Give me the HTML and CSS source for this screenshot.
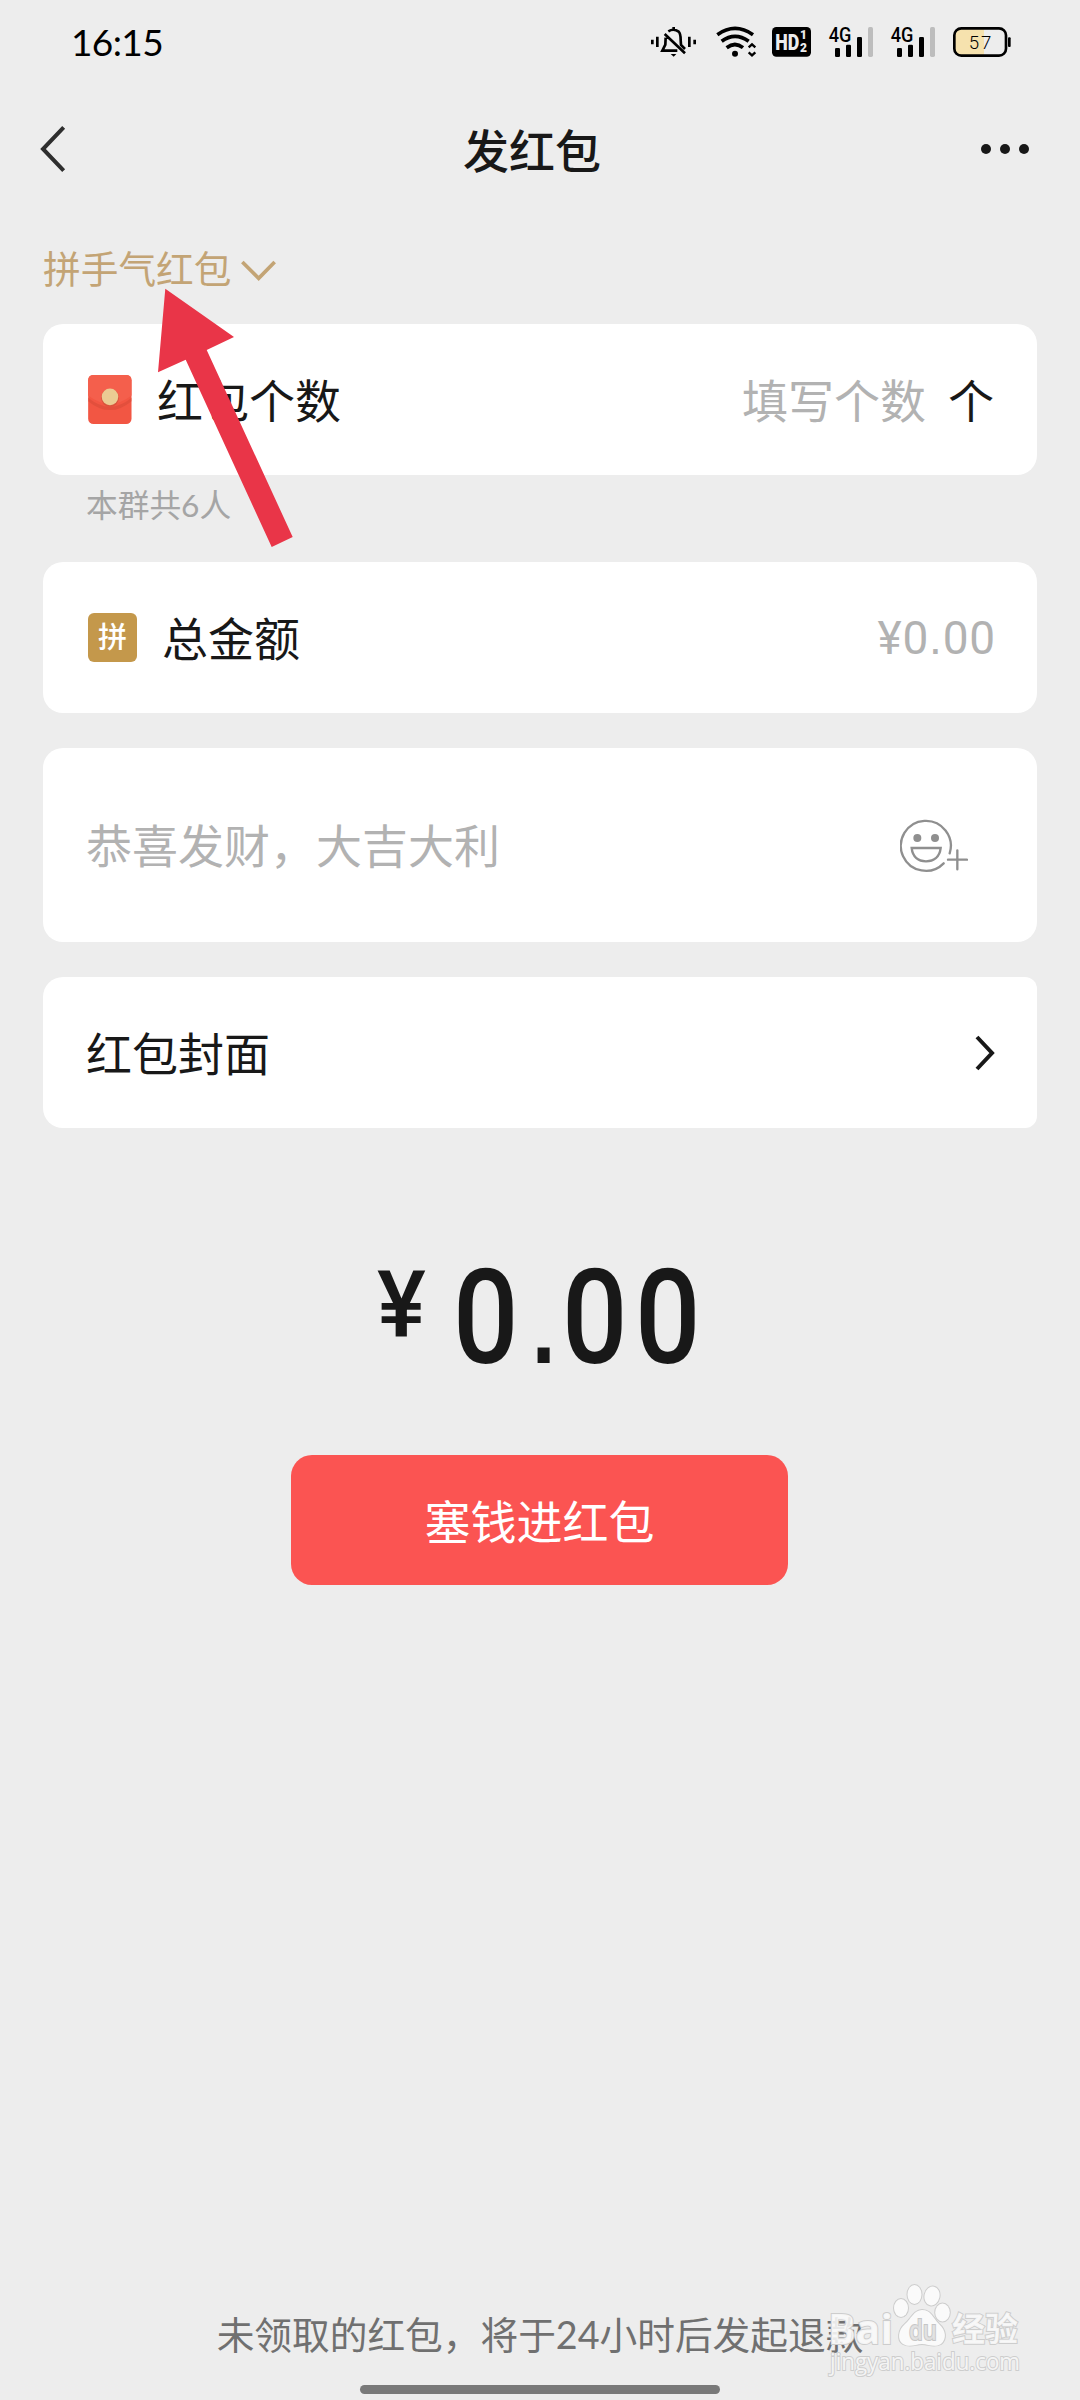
FILE: index.html
```html
<!DOCTYPE html>
<html lang="zh-CN">
<head>
<meta charset="utf-8">
<title>发红包</title>
<link rel="stylesheet" href="styles.css">
</head>
<body>
<div class="screen">
  <header class="status">
    <span class="clock">16:15</span>
    <div class="status-icons">
      <svg class="i-bell" viewBox="60 45 141 99" fill="none" stroke="#000" stroke-width="8">
        <path d="M67 89v14M82 80v31M178 80v31M194 89v14M131 51v10M104 72L165 130M115 64Q131 54 146 65Q152 71 152 90L153 105L165 117M107 83L106 104L97 122H142"/>
        <path d="M122 132H139L131 140Z" fill="#000" stroke="none"/>
      </svg>
      <svg class="i-wifi" viewBox="258 45 123 99" fill="none" stroke="#000" stroke-width="11">
        <path d="M262 74Q315 36 369 74M275 94Q315 64 356 94M290 113Q315 94 339 113"/>
        <circle cx="315" cy="131" r="9" fill="#000" stroke="none"/>
        <path d="M356 112L366 103L376 112M356 127L366 136L376 127" stroke-width="7"/>
      </svg>
      <svg class="i-hd" viewBox="426 45 117 99">
        <rect x="426" y="51" width="117" height="89" rx="13"/>
        <g class="hd-text"><text x="436" y="119" font-size="66" textLength="72" lengthAdjust="spacingAndGlyphs">HD</text><text class="sim" x="510" y="88" font-size="36">1</text><text class="sim" x="510" y="126" font-size="36">2</text></g>
      </svg>
      <svg class="i-signal" viewBox="594 45 138 99">
        <text class="net" x="596" y="96" font-size="61" textLength="68" lengthAdjust="spacingAndGlyphs">4G</text>
        <rect x="615" y="114" width="15" height="27" rx="4"/><rect x="648" y="104" width="15" height="37" rx="4"/><rect x="681" y="81" width="15" height="60" rx="4"/><rect x="714" y="51" width="15" height="90" rx="5" fill="#bdbdbd"/>
      </svg>
      <svg class="i-signal" viewBox="594 45 138 99">
        <text class="net" x="596" y="96" font-size="61" textLength="68" lengthAdjust="spacingAndGlyphs">4G</text>
        <rect x="615" y="114" width="15" height="27" rx="4"/><rect x="648" y="104" width="15" height="37" rx="4"/><rect x="681" y="81" width="15" height="60" rx="4"/><rect x="714" y="51" width="15" height="90" rx="5" fill="#bdbdbd"/>
      </svg>
      <svg class="i-battery" viewBox="966 45 180 99">
        <path d="M1062 56H994Q974 56 974 76V116Q974 136 994 136H1062Z" fill="#f6e2ae"/>
        <rect x="973" y="55" width="155" height="82" rx="21" fill="none" stroke="#000" stroke-width="8"/>
        <rect x="1134" y="82" width="8" height="29" rx="3"/>
        <text class="level" x="1050" y="116" font-size="56" text-anchor="middle" textLength="68">57</text>
      </svg>
    </div>
  </header>

  <nav class="navbar">
    <svg class="back" viewBox="120 375 78 144" fill="none" stroke="#2e2e2e" stroke-width="12"><path d="M191 382L129 447L191 512"/></svg>
    <h1 class="title">发红包</h1>
    <div class="more"><i></i><i></i><i></i></div>
  </nav>

  <div class="type-picker">
    <span>拼手气红包</span>
    <svg class="caret" viewBox="666 90 105 63" fill="none" stroke="#c3a475" stroke-width="11"><path d="M670 96L719 145L767 96"/></svg>
  </div>

  <main class="form">
    <section class="card">
      <svg class="envelope" viewBox="206 434 132 148">
        <rect x="206" y="434" width="131" height="148" rx="16" fill="#f25643"/>
        <path d="M206 503Q272 557 337 503V513Q272 567 206 513Z" fill="#d84b39" opacity=".6"/>
        <path d="M222 434H321Q337 434 337 450V496Q272 546 206 496V450Q206 434 222 434Z" fill="#f45f4c"/>
        <circle cx="272" cy="503" r="27" fill="#d9533c"/><circle cx="272" cy="500" r="25" fill="#ebcb93"/>
      </svg>
      <span class="label">红包个数</span>
      <span class="value muted">填写个数</span>
      <span class="unit">个</span>
    </section>
    <p class="hint">本群共6人</p>
    <section class="card">
      <span class="pin">拼</span>
      <span class="label">总金额</span>
      <span class="value money muted">¥0<span class="point">.</span>00</span>
    </section>
    <section class="card card-message">
      <span class="muted label">恭喜发财，大吉大利</span>
      <svg class="emoji" viewBox="180 771 204 165" fill="none" stroke="#8f8f8f" stroke-width="7" stroke-linecap="round">
        <path d="M329 877A75 75 0 1 0 311 907"/>
        <path d="M215 861H302C299 888 281 901 258 901S218 888 215 861Z"/>
        <circle cx="232" cy="831" r="12" fill="#8f8f8f" stroke="none"/><circle cx="285" cy="831" r="12" fill="#8f8f8f" stroke="none"/>
        <path d="M352 868V925M324 896H381"/>
      </svg>
    </section>
    <section class="card card-cover">
      <span class="label">红包封面</span>
      <svg class="chevron" viewBox="0 0 20 36" fill="none" stroke="#181818" stroke-width="4"><path d="M2 2L17 18L2 34"/></svg>
    </section>
  </main>

  <div class="total"><span class="currency">¥</span><span class="amount">0<span class="point">.</span>00</span></div>
  <button class="submit">塞钱进红包</button>

  <footer class="footer">未领取的红包，将于24小时后发起退款</footer>
  <div class="home-bar"></div>

  <svg class="pointer" viewBox="0 0 136 260"><path d="M7.300 .7L76 49L48.700 62L134.700 249L113.700 259L27.700 71.700L0 84.300Z" fill="#e93548"/></svg>

  <svg class="watermark" viewBox="0 0 204 100">
    <g class="wm">
      <text x="2" y="64" font-size="42" font-weight="700" textLength="65" lengthAdjust="spacingAndGlyphs">Bai</text>
      <ellipse cx="75" cy="28" rx="7" ry="9"/><ellipse cx="88.500" cy="14.500" rx="7" ry="9.500"/><ellipse cx="106" cy="16" rx="7.500" ry="9.500" transform="rotate(12 106 16)"/><ellipse cx="116.500" cy="32.500" rx="7.300" ry="9"/>
      <path d="M96 30C88 30 85 39 79 44C72 50 71 60 77 64C84 68 90 64 96 64C102 64 108 68 115 64C121 59 120 50 113 44C107 38 105 30 96 30Z"/>
      <text x="83" y="60" font-size="27" class="du" textLength="28" lengthAdjust="spacingAndGlyphs">du</text>
      <text x="126" y="61" font-size="33" font-weight="700">经验</text>
      <text x="4" y="90" font-size="24" textLength="190" lengthAdjust="spacingAndGlyphs">jingyan.baidu.com</text>
    </g>
  </svg>
</div>
</body>
</html>
```
FILE: styles.css
```css
* { box-sizing: border-box; }

body {
  margin: 0;
  background: #ededed;
}

.screen {
  position: relative;
  display: flex;
  flex-direction: column;
  width: 1080px;
  height: 2400px;
  overflow: hidden;
  background: #ededed;
  color: #181818;
  font-family: Lato, "Noto Sans CJK SC", sans-serif;
  font-size: 46px;
  font-weight: 400;
  line-height: 60px;
}

svg { display: block; flex: none; }

/* status bar */
.status {
  display: flex;
  justify-content: space-between;
  height: 84px;
  padding: 0 68px 0 71px;
}

.clock {
  margin-top: 12px;
  color: #000;
  font-size: 37px;
  letter-spacing: -.6px;
}

.status-icons {
  display: flex;
  padding-top: 25px;
}

.status-icons svg { height: 33px; }
.i-bell { width: 47px; margin-right: 19px; }
.i-wifi { width: 41px; margin-right: 15px; }
.i-hd { width: 39px; margin-right: 17px; }
.i-signal { width: 46px; margin-right: 16px; }
.i-battery { width: 60px; }
.hd-text { fill: #ececec; font-family: Roboto, sans-serif; font-weight: 900; }
.sim { stroke: #000; stroke-width: 6px; paint-order: stroke; }
.net { font-family: Roboto, sans-serif; font-weight: 500; }
.level { font-family: Roboto, sans-serif; font-weight: 300; }

/* navigation bar */
.navbar {
  display: grid;
  grid-template-columns: 200px 1fr 200px;
  align-items: center;
  height: 130px;
  padding: 0 51px 0 40px;
}

.back { width: 26px; height: 48px; }

.title {
  margin: 0 0 0 -5px;
  padding-top: 3px;
  font-size: 46px;
  font-weight: 500;
  text-align: center;
}

.more {
  display: flex;
  justify-content: flex-end;
  gap: 9px;
}

.more i {
  width: 10px;
  height: 10px;
  border-radius: 50%;
  background: #181818;
}

/* packet type */
.type-picker {
  display: flex;
  align-items: center;
  height: 110px;
  padding-left: 43px;
  color: #c3a475;
  font-size: 37.7px;
}

.caret { width: 35px; height: 21px; margin: 2px 0 0 10px; }

/* form cards */
.form {
  display: flex;
  flex-direction: column;
  padding: 0 43px;
}

.card {
  display: flex;
  align-items: center;
  height: 151px;
  padding: 0 43px;
  border-radius: 20px;
  background: #fff;
}

.label, .value, .unit { padding-top: 2px; }
.envelope { width: 44px; height: 49px; margin: 0 25px 0 2px; }
.value { margin-left: auto; }
.muted { color: #b2b2b2; }
.unit { margin-left: 22px; }

.hint {
  height: 87px;
  margin: 0;
  padding-left: 43px;
  color: #a5a5a5;
  font-size: 31.7px;
}

.pin {
  width: 49px;
  height: 49px;
  margin: 0 25px 0 2px;
  border-radius: 6px;
  background: #c4984b;
  color: #fff;
  font-size: 29px;
  font-weight: 500;
  line-height: 48px;
  text-align: center;
}

.money {
  margin-right: -2px;
  padding-top: 0;
  font-family: Roboto, sans-serif;
  letter-spacing: .8px;
}

.point { font-family: "Liberation Sans", sans-serif; }

.card-message {
  justify-content: space-between;
  height: 194px;
  margin-top: 35px;
  padding-right: 69px;
}

.emoji { width: 68px; height: 55px; }

.card-cover {
  justify-content: space-between;
  margin-top: 35px;
  padding-right: 42px;
  border-radius: 20px 12px 12px 20px;
}

.chevron { width: 20px; height: 36px; }

/* total and submit */
.total {
  display: flex;
  align-items: flex-start;
  height: 327px;
  padding: 140px 0 0 377px;
  font-family: Roboto, sans-serif;
  font-weight: 500;
}

.currency {
  width: 49px;
  margin-right: 27px;
  font-size: 92px;
  line-height: 76px;
}

.amount {
  font-size: 131px;
  letter-spacing: 8.5px;
  line-height: 100px;
  transform: scaleX(.88);
  transform-origin: left;
}

.amount .point {
  font-size: 144px;
  font-weight: 400;
  letter-spacing: 1px;
  line-height: 0;
}

.submit {
  width: 497px;
  height: 130px;
  margin-left: 291px;
  padding: 3px 0 0;
  border: 0;
  border-radius: 21px;
  background: #fb5452;
  color: #fff;
  font: inherit;
}

/* footer */
.footer {
  margin-top: auto;
  color: #707070;
  font-size: 37.7px;
  text-align: center;
}

.home-bar {
  width: 360px;
  height: 9px;
  margin: 20px auto 6px;
  border-radius: 5px;
  background: #797979;
}

/* overlays */
.pointer {
  position: absolute;
  left: 158px;
  top: 288px;
  width: 136px;
  height: 260px;
}

.watermark {
  position: absolute;
  left: 826px;
  top: 2280px;
  width: 204px;
  height: 100px;
}

.wm {
  fill: #fafafa;
  stroke: #cdcdcd;
  stroke-width: 2px;
  paint-order: stroke;
  font-family: "Open Sans", "Noto Sans CJK SC", sans-serif;
}

.wm text { fill-opacity: .9; }
.wm .du { fill: #e2e2e2; stroke: #c6c6c6; font-weight: 600; }
```
